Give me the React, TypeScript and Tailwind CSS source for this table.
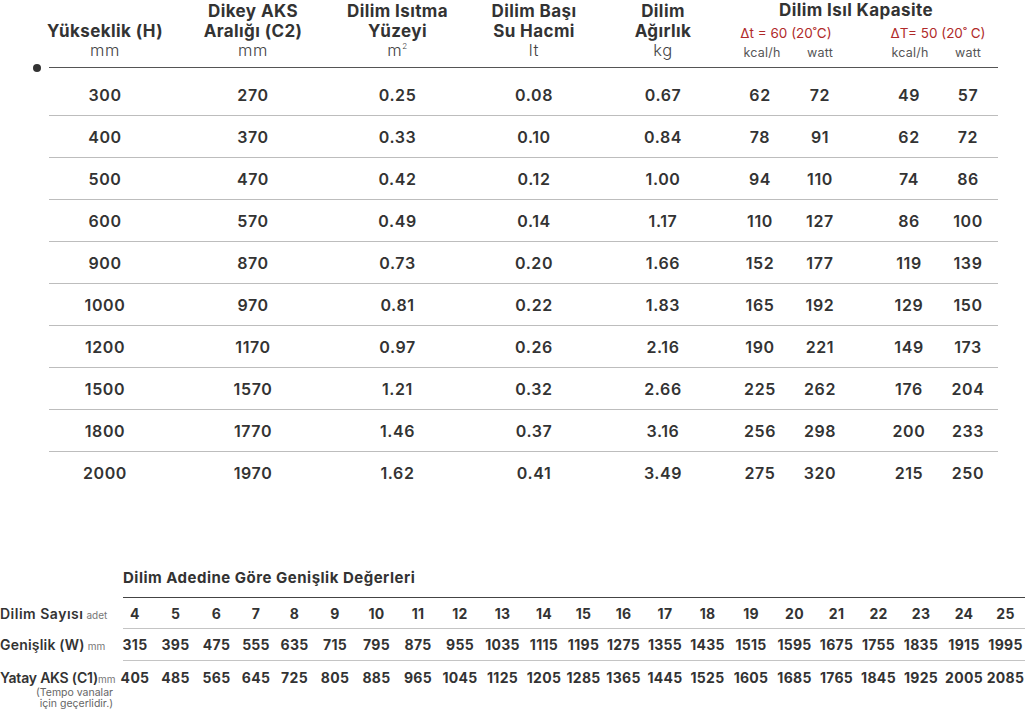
const rows = [
  ["300", "270", "0.25", "0.08", "0.67", "62", "72", "49", "57"],
  ["400", "370", "0.33", "0.10", "0.84", "78", "91", "62", "72"],
  ["500", "470", "0.42", "0.12", "1.00", "94", "110", "74", "86"],
  ["600", "570", "0.49", "0.14", "1.17", "110", "127", "86", "100"],
  ["900", "870", "0.73", "0.20", "1.66", "152", "177", "119", "139"],
  ["1000", "970", "0.81", "0.22", "1.83", "165", "192", "129", "150"],
  ["1200", "1170", "0.97", "0.26", "2.16", "190", "221", "149", "173"],
  ["1500", "1570", "1.21", "0.32", "2.66", "225", "262", "176", "204"],
  ["1800", "1770", "1.46", "0.37", "3.16", "256", "298", "200", "233"],
  ["2000", "1970", "1.62", "0.41", "3.49", "275", "320", "215", "250"],
];

const counts = Array.from({ length: 22 }, (_, i) => i + 4);
const widths = counts.map((n) => 315 + (n - 4) * 80);
const axes = counts.map((n) => 405 + (n - 4) * 80);

const topCols = "grid grid-cols-[148px_146px_141px_133px_113px_78px_74px_74px_60px]";
// nudges so every column sits on the same centre as the picture
const shift = ["", "pl-[2px]", "pl-[4px]", "pl-[3px]", "pl-[15px]", "pl-[18px]", "pr-[14px]", "pl-[16px]", ""];
const bottomCols =
  "grid grid-cols-[115px_40px_41px_41px_38px_39px_42px_41px_42px_42px_43px_40px_39px_41px_42px_43px_44px_43px_41px_43px_42px_44px_39px]";

function HeadCell({ lines, unit, nudge }: { lines: string[]; unit: React.ReactNode; nudge: string }) {
  return (
    <div className={`flex flex-col items-center text-center pb-[9px] ${nudge}`}>
      {lines.map((l) => (
        <div key={l} className="text-[17px] font-bold leading-[20px] tracking-[0.4px] text-[#333] whitespace-nowrap">
          {l}
        </div>
      ))}
      <div className="text-[16.5px] font-light leading-[19px] tracking-[0.6px] text-[#444]">{unit}</div>
    </div>
  );
}

function SpecTable() {
  return (
    <section>
      <div className={`${topCols} ml-[31px] w-[967px] h-[67px] items-end`}>
        <HeadCell lines={["Yükseklik (H)"]} unit="mm" nudge={shift[0]} />
        <HeadCell lines={["Dikey AKS", "Aralığı (C2)"]} unit="mm" nudge={shift[1]} />
        <HeadCell
          lines={["Dilim Isıtma", "Yüzeyi"]}
          nudge={shift[2]}
          unit={
            <span>
              m<sup className="text-[8px] -top-[7px]">2</sup>
            </span>
          }
        />
        <HeadCell lines={["Dilim Başı", "Su Hacmi"]} unit="lt" nudge={shift[3]} />
        <HeadCell lines={["Dilim", "Ağırlık"]} unit="kg" nudge={shift[4]} />
        <div className="col-span-4 flex flex-col pb-[8px]">
          <div className="text-center text-[17px] font-bold leading-[20px] tracking-[0.4px] text-[#333] pl-[2px]">
            Dilim Isıl Kapasite
          </div>
          <div className="grid grid-cols-[152px_134px] mt-[3px] text-[13.5px] leading-[20px] text-[#b02a2a]">
            <div className="text-center pr-[4px]">Δt = 60 (20˚C)</div>
            <div className="text-center pl-[14px]">ΔT= 50 (20˚ C)</div>
          </div>
          <div className="grid grid-cols-[78px_74px_74px_60px] mt-[2px] text-[12.5px] leading-[16px] tracking-[0.2px] text-[#555]">
            <div className="text-center pl-[22px]">kcal/h</div>
            <div className="text-center pr-[14px]">watt</div>
            <div className="text-center pl-[18px]">kcal/h</div>
            <div className="text-center">watt</div>
          </div>
        </div>
      </div>
      {/* bullet + header rule, 9px tall box that only takes 1px of flow */}
      <div className="flex items-center ml-[33px] w-[965px] h-[9px] -my-[4px]">
        <div className="w-[8px] h-[8px] rounded-full bg-[#333] shrink-0" />
        <div className="ml-[8px] flex-1 h-px bg-[#555]" />
      </div>
      <div className="h-[6px]" />
      {rows.map((r, i) => (
        <div key={r[0]}>
          <div className={`${topCols} ml-[31px] w-[967px] h-[41px] items-center`}>
            {r.map((v, j) => (
              <div key={j} className={`text-center text-[16px] font-semibold tracking-[0.6px] text-[#333] ${shift[j]}`}>
                {v}
              </div>
            ))}
          </div>
          {i < rows.length - 1 && <div className="ml-[49px] w-[949px] h-px bg-[#bdbdbd]" />}
        </div>
      ))}
    </section>
  );
}

function WidthRow({
  label,
  unit,
  values,
  gap,
  track,
}: {
  label: string;
  unit: string;
  values: (string | number)[];
  gap: string;
  track: string;
}) {
  return (
    <div className={`${bottomCols} items-center`}>
      <div className={`whitespace-nowrap text-[14px] font-semibold text-[#333] ${track}`}>
        {label}
        <span className={`${gap} text-[10px] font-normal tracking-normal text-[#777]`}>{unit}</span>
      </div>
      {values.map((v, i) => (
        <div key={i} className="text-center text-[14px] font-bold tracking-[0.3px] text-[#333]">
          {v}
        </div>
      ))}
    </div>
  );
}

function WidthTable() {
  return (
    <section className="mt-[75px]">
      <div className="ml-[123px] text-[15px] font-bold leading-[20px] tracking-[0.5px] text-[#333]">
        Dilim Adedine Göre Genişlik Değerleri
      </div>
      <div className="mt-[9px] ml-[123px] h-px bg-[#444]" />
      <div className="h-[30px] flex flex-col justify-center">
        <WidthRow label="Dilim Sayısı" unit="adet" values={counts} gap="ml-[3px]" track="tracking-[0.5px]" />
      </div>
      <div className="ml-[123px] h-px bg-[#c4c4c4]" />
      <div className="h-[31px] flex flex-col justify-center">
        <WidthRow label="Genişlik (W)" unit="mm" values={widths} gap="ml-[3px]" track="tracking-[0.2px]" />
      </div>
      <div className="ml-[123px] h-px bg-[#c4c4c4]" />
      <div className="h-[32px] flex flex-col justify-center">
        <WidthRow label="Yatay AKS (C1)" unit="mm" values={axes} gap="ml-0" track="tracking-[-0.2px]" />
      </div>
      <div className="-mt-[6px] w-[113px] text-right text-[10.5px] leading-[11px] text-[#666]">
        <div>(Tempo vanalar</div>
        <div>için geçerlidir.)</div>
      </div>
    </section>
  );
}

export default function App() {
  return (
    <div className="w-[1025px] h-[710px] overflow-hidden bg-white font-['Inter',sans-serif]">
      <SpecTable />
      <WidthTable />
    </div>
  );
}
